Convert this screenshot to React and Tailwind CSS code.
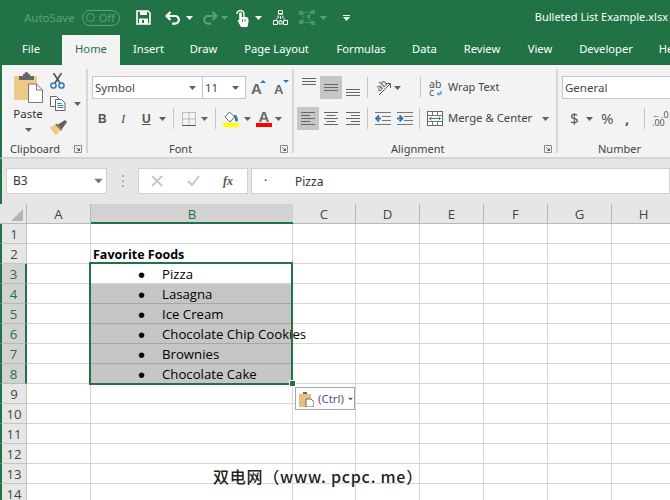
const Caret = ({ c = "#5f5f5f", className = "" }) => (
  <svg width="7" height="4" viewBox="0 0 7 4" className={className}><path d="M0 0h7L3.500 4z" fill={c} /></svg>
);

const Toggle = () => (
  <div className="ml-[7px] flex h-[16px] w-[38px] shrink-0 items-center rounded-full border border-[#5d9f7c] pl-[3px]">
    <div className="h-[9px] w-[9px] rounded-full border border-[#5d9f7c]" />
    <span className="ml-[4px] text-[11px] leading-none text-[#5d9f7c]">Off</span>
  </div>
);
const Save = () => (
  <svg width="15" height="15" viewBox="0 0 15 15" className="ml-[16px] shrink-0">
    <path d="M1 1h11l2 2v11H1z" fill="none" stroke="#fff" strokeWidth="1.600" />
    <rect x="4" y="1" width="7" height="4" fill="#fff" />
    <path d="M3 8.500h9V14H3zM6 10v3h2v-3z" fill="#fff" fillRule="evenodd" />
  </svg>
);
const Undo = ({ c, flip, className }) => (
  <svg width="16" height="14" viewBox="0 0 16 14" className={className} style={flip ? { transform: "scaleX(-1)" } : undefined}>
    <path d="M5.500 1L1.500 5 5.500 9M2.500 5H10a3.800 3.800 0 0 1 0 7.600H7" fill="none" stroke={c} strokeWidth="2.200" />
  </svg>
);
const Touch = () => (
  <svg width="13" height="18" viewBox="0 0 13 18" className="ml-[8px] shrink-0">
    <path d="M1 5a3.500 3.500 0 0 1 7 0v3" fill="none" stroke="#fff" strokeWidth="1.400" />
    <path d="M3.200 4.500a1.300 1.300 0 0 1 2.600 0V8h4a2.500 2.500 0 0 1 2.700 2.500V13l-1 5H5L1.500 11.500l1.700-.7z" fill="#fff" />
    <path d="M6.500 10v3M9 10v3" stroke="#217346" strokeWidth=".8" />
  </svg>
);
const Tree = () => (
  <svg width="15" height="15" viewBox="0 0 15 15" className="ml-[11px] shrink-0">
    <path d="M5.500.5h4v3h-4zM.5 10.500h4v4h-4zM10.500 10.500h4v4h-4zM6 11h3v3H6z" fill="none" stroke="#fff" />
    <path d="M6 4l-3 6.500M9 4l3 6.500M7.500 4v7M5 7.500h5" stroke="#fff" strokeWidth="1.200" strokeDasharray="1 1" />
  </svg>
);
const Shape = () => (
  <svg width="17" height="15" viewBox="0 0 17 15" className="ml-[11px] shrink-0">
    <path d="M4 3l9-1-4 5 4 6-9-1z" fill="none" stroke="#5d9f7c" strokeDasharray="2 1" />
    <path d="M0 1h4v4H0zM12 0h4v4h-4zM0 10h4v4H0zM12 11h4v4h-4zM8 5h3v3H8z" fill="#4f9270" />
  </svg>
);

const TABS = [
  ["File", "w-[62px]"], ["Home", "w-[58px]"], ["Insert", "w-[57px]"], ["Draw", "w-[53px]"],
  ["Page Layout", "w-[93px]"], ["Formulas", "w-[76px]"], ["Data", "w-[51px]"], ["Review", "w-[64px]"],
  ["View", "w-[52px]"], ["Developer", "w-[80px]"], ["Help", "w-[50px]"],
];

const Launcher = ({ className = "" }) => (
  <svg width="8" height="8" viewBox="0 0 8 8" className={className}>
    <path d="M.5 7.500v-7h7v7z" fill="none" stroke="#8a8a8a" />
    <path d="M2.500 2.500l3 3M5.500 3.500v2h-2" fill="none" stroke="#555" />
  </svg>
);
const Sep = () => <div className="mt-[4px] h-[84px] w-[2px] shrink-0 self-start bg-[#d6d6d6]" />;
const VSep = ({ className = "" }) => <div className={`h-[21px] w-[1px] shrink-0 bg-[#c6c6c6] ${className}`} />;

const Clipboard = () => (
  <svg width="29" height="31" viewBox="0 0 29 31">
    <path d="M1.500 4H23v24H1.500A1.500 1.500 0 0 1 0 26.500v-21A1.500 1.500 0 0 1 1.500 4z" fill="#f0c987" />
    <path d="M5 4h4V2h1.500a2 2 0 0 1 4 0H16v2h4v4H5z" fill="#666" />
    <path d="M14.500 12h8l6 6V30.500h-14z" fill="#fff" stroke="#777" />
    <path d="M22.500 12v6H28" fill="none" stroke="#777" />
  </svg>
);
const Scissors = () => (
  <svg width="15" height="16" viewBox="0 0 15 16">
    <path d="M3.500 0l6.500 10M11.500 0L5 10" stroke="#555" strokeWidth="1.700" />
    <circle cx="3.500" cy="12.500" r="2.600" fill="none" stroke="#2f79b9" strokeWidth="1.500" />
    <circle cx="11.500" cy="12.500" r="2.600" fill="none" stroke="#2f79b9" strokeWidth="1.500" />
  </svg>
);
const Copy = () => (
  <svg width="16" height="15" viewBox="0 0 16 15">
    <path d="M.5.500h6l2.500 2.500V3M.5.500v10H5" fill="#fff" stroke="#666" />
    <path d="M5.500 3.500h6l3.500 3.500v7.500H5.500z" fill="#fff" stroke="#666" />
    <path d="M7.500 7.500h4M7.500 9.500h6M7.500 11.500h6" stroke="#2f79b9" />
  </svg>
);
const Painter = () => (
  <svg width="17" height="15" viewBox="0 0 17 15">
    <path d="M0 7l5-2 5 6-4 4c-2-1-5-5-6-8z" fill="#f0c987" />
    <path d="M5 5l6 6 1.500-2L7 3.500z" fill="#8a7a5a" />
    <path d="M8 4.500l7-4.500 2 2-5 7z" fill="#5f5f5f" />
  </svg>
);
const AlignLines = ({ kind, className = "" }) => {
  const sets = {
    top: ["M1 1.500h14", "M1 4.500h14", "M1 7.500h14"],
    mid: ["M1 4.500h14", "M1 7.500h14", "M1 10.500h14"],
    bot: ["M1 7.500h14", "M1 10.500h14", "M1 13.500h14"],
    left: ["M1 1.500h14", "M1 4.500h9", "M1 7.500h14", "M1 10.500h9", "M1 13.500h14"],
    center: ["M1 1.500h14", "M3.500 4.500h9", "M1 7.500h14", "M3.500 10.500h9", "M1 13.500h14"],
    right: ["M1 1.500h14", "M6 4.500h9", "M1 7.500h14", "M6 10.500h9", "M1 13.500h14"],
  };
  return (
    <svg width="16" height="15" viewBox="0 0 16 15" className={className}>
      {sets[kind].map((d) => <path key={d} d={d} stroke="#666" />)}
    </svg>
  );
};
const Indent = ({ flip, className = "" }) => (
  <svg width="16" height="13" viewBox="0 0 16 13" className={className}>
    <path d="M0 .500h16M7 4.500h9M7 8.500h9M0 12.500h16" stroke="#777" />
    {flip ? <path d="M6 6.500H1.500M4 3.500L1 6.500l3 3" stroke="#2f79b9" strokeWidth="1.800" fill="none" />
      : <path d="M0 6.500h4.500M2.500 3.500l3 3-3 3" stroke="#2f79b9" strokeWidth="1.800" fill="none" />}
  </svg>
);
const Orient = ({ className = "" }) => (
  <div className={`relative h-[16px] w-[16px] shrink-0 ${className}`}>
    <span className="absolute left-0 top-[-1px] -rotate-45 text-[10px] leading-[12px] text-[#555]">ab</span>
    <svg width="16" height="16" viewBox="0 0 16 16" className="absolute left-0 top-0"><path d="M4 15L15 4M11 3.500h4.500V8" stroke="#555" fill="none" /></svg>
  </div>
);
const Wrap = () => (
  <div className="relative flex h-[16px] w-[13px] flex-col text-[10.500px] leading-[8px] text-[#555]">
    <span>ab</span>
    <span>c</span>
    <svg width="6" height="5" viewBox="0 0 6 5" className="absolute bottom-0 right-0"><path d="M5 0v3H1.500M3 1.500L1.500 3 3 4.500" fill="none" stroke="#2f79b9" /></svg>
  </div>
);
const Merge = () => (
  <svg width="16" height="15" viewBox="0 0 16 15">
    <rect x=".5" y=".5" width="15" height="14" fill="#fff" stroke="#666" />
    <path d="M.5 4.500h15M.5 10.500h15M5.500.5v4M10.500.5v4M5.500 10.500v4M10.500 10.500v4" stroke="#777" />
    <path d="M2.500 7.500h11M4.500 5.800l-2 1.700 2 1.700M11.500 5.800l2 1.700-2 1.700" stroke="#2f79b9" fill="none" />
  </svg>
);
const Border = () => (
  <svg width="14" height="14" viewBox="0 0 14 14">
    <path d="M.5.500h13v13H.5zM7 .5v13M.5 7h13" fill="none" stroke="#888" strokeDasharray="1 1" />
    <path d="M.5 13.500h13" stroke="#555" />
  </svg>
);
const Fill = () => (
  <div className="flex w-[16px] flex-col items-center">
    <svg width="16" height="12" viewBox="0 0 16 12">
      <path d="M6.500 1l5 5-4.500 5-5-5z" fill="#fff" stroke="#666" />
      <path d="M4.500 3V1.500M11 4h2c1 2 2 3 2 5a1.500 1.500 0 0 1-3 0c0-1 0-2-1-3z" fill="#2f79b9" />
    </svg>
    <div className="h-[4px] w-[16px] bg-[#ffff00]" />
  </div>
);
const FontColor = () => (
  <div className="flex w-[16px] flex-col items-center">
    <span className="font-['Liberation_Sans',sans-serif] text-[15px] font-bold leading-[12px] text-[#666]">A</span>
    <div className="h-[4px] w-[16px] bg-[#ff0000]" />
  </div>
);
const Grow = ({ up, className = "" }) => (
  <div className={`relative flex h-[17px] w-[15px] items-end ${className}`}>
    <span className={`${up ? "text-[15px]" : "text-[13px]"} font-['Liberation_Sans',sans-serif] font-bold leading-none text-[#666]`}>A</span>
    <svg width="6" height="3" viewBox="0 0 6 3" className="absolute right-0 top-[1px]">
      <path d={up ? "M0 3h6L3 0z" : "M0 0h6L3 3z"} fill="#2f79b9" />
    </svg>
  </div>
);
const Label = ({ children, className = "", launcher }) => (
  <div className={`absolute bottom-0 left-0 flex h-[16px] w-full items-center text-[11px] text-[#444] ${className}`}>
    {children}
    {launcher && <Launcher className="absolute right-[4px] top-[4px]" />}
  </div>
);
const Row = ({ children, className = "" }) => <div className={`flex items-center ${className}`}>{children}</div>;

const HEAD = [["A", 0], ["B", 1], ["C", 0], ["D", 0], ["E", 0], ["F", 0], ["G", 0], ["H", 0]];
const ROWS = Array.from({ length: 14 }, (_, i) => i + 1);
const FOODS = { 3: "Pizza", 4: "Lasagna", 5: "Ice Cream", 6: "Chocolate Chip Cookies", 7: "Brownies", 8: "Chocolate Cake" };

export default function App() {
  return (
    <div className="relative h-[500px] w-[670px] overflow-hidden bg-white font-['Noto_Sans',sans-serif]">
      {/* Title bar */}
      <div className="flex h-[35px] items-center bg-[#217346] pl-[24px]">
        <span className="text-[11.500px] text-[#5d9f7c]">AutoSave</span>
        <Toggle />
        <Save />
        <Undo c="#fff" className="ml-[14px] shrink-0" />
        <Caret c="#fff" className="ml-[5px] shrink-0" />
        <Undo c="#5d9f7c" flip className="ml-[9px] shrink-0" />
        <Caret c="#5d9f7c" className="ml-[3px] shrink-0" />
        <Touch />
        <Caret c="#fff" className="ml-[6px] shrink-0" />
        <Tree />
        <Shape />
        <Caret c="#5d9f7c" className="ml-[4px] shrink-0" />
        <svg width="7" height="6" viewBox="0 0 7 6" className="ml-[16px] shrink-0"><path d="M0 0h7v1H0zM0 2h7L3.500 6z" fill="#fff" /></svg>
        <span className="ml-auto whitespace-nowrap pr-[2px] text-[11px] text-white">Bulleted List Example.xlsx</span>
      </div>
      {/* Tabs */}
      <div className="flex h-[30px] items-center overflow-hidden bg-[#217346]">
        {TABS.map(([t, w]) => (
          <div key={t} className={`${w} flex h-full shrink-0 items-center justify-center pb-[1px] text-[11.200px] ${t === "Home" ? "bg-[#f3f3f3] text-[#217346]" : "text-white"}`}>{t}</div>
        ))}
      </div>
      {/* Ribbon */}
      <div className="flex h-[94px] overflow-hidden border-b-2 border-l-2 border-[#d4d4d4] border-l-[#217346] bg-[#f3f3f3]">
        {/* Clipboard */}
        <div className="relative flex w-[84px] shrink-0 pl-[10px] pt-[7px]">
          <div className="flex w-[32px] flex-col items-center">
            <Clipboard />
            <span className="mt-[2px] text-[11.500px] leading-[18px] text-[#333]">Paste</span>
            <Caret className="mt-[5px]" />
          </div>
          <div className="ml-[6px] flex flex-col pt-[1px]">
            <Scissors />
            <Row className="mt-[7px]"><Copy /><Caret className="ml-[8px]" /></Row>
            <div className="mt-[9px]"><Painter /></div>
          </div>
          <Label launcher className="pl-[8px]">Clipboard</Label>
        </div>
        <Sep />
        {/* Font */}
        <div className="relative w-[204px] shrink-0 pl-[4px] pt-[11px]">
          <Row>
            <div className="flex h-[23px] w-[111px] items-center justify-between border border-[#c6c6c6] bg-white pl-[2px] pr-[6px] text-[11.500px] text-[#444]">Symbol<Caret /></div>
            <div className="flex h-[23px] w-[43px] items-center justify-between border border-l-0 border-[#c6c6c6] bg-white pl-[2px] pr-[6px] text-[11.500px] text-[#444]">11<Caret /></div>
            <Grow up className="ml-[5px]" />
            <Grow className="ml-[8px]" />
          </Row>
          <Row className="mt-[8px] h-[23px]">
            <span className="ml-[6px] w-[8px] font-['Liberation_Sans',sans-serif] text-[12px] font-bold text-[#555]">B</span>
            <span className="ml-[15px] w-[7px] font-['Liberation_Serif',serif] text-[13px] italic text-[#555]">I</span>
            <span className="ml-[14px] w-[9px] font-['Liberation_Sans',sans-serif] text-[12px] font-bold text-[#555] underline">U</span>
            <Caret className="ml-[8px]" />
            <VSep className="ml-[7px]" />
            <div className="ml-[8px]"><Border /></div>
            <Caret className="ml-[5px]" />
            <VSep className="ml-[7px]" />
            <div className="ml-[7px]"><Fill /></div>
            <Caret className="ml-[5px]" />
            <div className="ml-[5px]"><FontColor /></div>
            <Caret className="ml-[3px]" />
          </Row>
          <Label launcher className="pl-[81px]">Font</Label>
        </div>
        <Sep />
        {/* Alignment */}
        <div className="relative w-[262px] shrink-0 pl-[3px] pt-[11px]">
          <Row className="h-[23px]">
            <div className="flex h-[23px] w-[23px] items-center justify-center"><AlignLines kind="top" className="-mt-[6px]" /></div>
            <div className="flex h-[23px] w-[22px] items-center justify-center bg-[#c6c6c6]"><AlignLines kind="mid" /></div>
            <div className="flex h-[23px] w-[22px] items-center justify-center"><AlignLines kind="bot" className="mt-[4px]" /></div>
            <VSep className="ml-[3px]" />
            <Orient className="ml-[7px]" />
            <Caret className="ml-[3px]" />
            <VSep className="ml-[19px]" />
            <div className="ml-[8px]"><Wrap /></div>
            <span className="ml-[6px] whitespace-nowrap text-[11px] text-[#444]">Wrap Text</span>
          </Row>
          <Row className="mt-[8px] h-[23px]">
            <div className="flex h-[23px] w-[22px] items-center justify-center bg-[#c6c6c6]"><AlignLines kind="left" /></div>
            <div className="flex h-[23px] w-[23px] items-center justify-center"><AlignLines kind="center" /></div>
            <div className="flex h-[23px] w-[22px] items-center justify-center"><AlignLines kind="right" /></div>
            <VSep className="ml-[3px]" />
            <Indent flip className="ml-[7px]" />
            <Indent className="ml-[6px]" />
            <VSep className="ml-[6px]" />
            <div className="ml-[7px]"><Merge /></div>
            <span className="ml-[5px] whitespace-nowrap text-[11.300px] text-[#444]">Merge &amp; Center</span>
            <Caret className="ml-[10px]" />
          </Row>
          <Label launcher className="pl-[97px]">Alignment</Label>
        </div>
        <Sep />
        {/* Number */}
        <div className="relative w-[120px] shrink-0 pl-[4px] pt-[11px]">
          <div className="flex h-[23px] w-[130px] items-center border border-[#c6c6c6] bg-white pl-[2px] text-[11.500px] text-[#444]">General</div>
          <Row className="mt-[8px] h-[23px]">
            <span className="ml-[8px] w-[9px] text-[15px] text-[#555]">$</span>
            <Caret className="ml-[7px]" />
            <span className="ml-[8px] w-[14px] text-[15px] text-[#555]">%</span>
            <span className="ml-[10px] w-[6px] text-[15px] font-bold text-[#555]">,</span>
            <VSep className="ml-[13px]" />
            <span className="ml-[7px] whitespace-nowrap text-[9px] leading-[8px] text-[#555]"><span className="text-[#2f79b9]">←</span>.0<br />.00</span>
          </Row>
          <Label className="pl-[40px]">Number</Label>
        </div>
      </div>
      {/* Formula bar */}
      <div className="flex h-[45px] items-start border-l-2 border-[#217346] bg-[#e6e6e6] pl-[4px] pt-[9px]">
        <div className="flex h-[26px] w-[101px] shrink-0 items-center justify-between border border-[#d0d0d0] bg-white pl-[6px] pr-[4px] text-[12px] text-[#333]">B3<Caret c="#777" className="scale-125" /></div>
        <div className="ml-[15px] flex h-[26px] w-[2px] shrink-0 flex-col justify-center gap-[3px]">
          <div className="h-[2px] w-[2px] bg-[#b0b0b0]" /><div className="h-[2px] w-[2px] bg-[#b0b0b0]" /><div className="h-[2px] w-[2px] bg-[#b0b0b0]" />
        </div>
        <div className="ml-[14px] flex h-[26px] w-[110px] shrink-0 items-center border border-[#d0d0d0] bg-white">
          <svg width="12" height="12" viewBox="0 0 12 12" className="ml-[12px]"><path d="M1 1l10 10M11 1L1 11" stroke="#c6c6c6" strokeWidth="1.800" /></svg>
          <svg width="13" height="12" viewBox="0 0 13 12" className="ml-[24px]"><path d="M1 6l4 4 7-9" fill="none" stroke="#c6c6c6" strokeWidth="2" /></svg>
          <span className="ml-[23px] font-['Liberation_Serif',serif] text-[12px] font-bold italic text-[#555]">fx</span>
        </div>
        <div className="ml-[3px] flex h-[26px] grow items-center border border-[#d0d0d0] bg-white pl-[12px] text-[12px] text-[#333]">
          <span className="w-[31px]">·</span><span className="pt-[1px]">Pizza</span>
        </div>
      </div>
      {/* Sheet */}
      <div className="relative grid grid-cols-[27px_64px_202px_63px_64px_64px_64px_64px_64px] auto-rows-[20px] font-['Open_Sans',sans-serif] text-[13.200px] text-black">
        <div className="flex items-end justify-end border-b border-r border-[#b8b8b8] bg-[#e6e6e6] pb-[2px] pr-[3px]">
          <svg width="12" height="12" viewBox="0 0 12 12"><path d="M12 0v12H0z" fill="#b4b4b4" /></svg>
        </div>
        {HEAD.map(([h, sel]) => (
          <div key={h} className={`flex items-center justify-center pt-[3px] ${sel ? "border-b-2 border-[#217346] bg-[#d2d2d2] text-[#217346]" : "border-b border-r border-[#b8b8b8] bg-[#e6e6e6] text-[#444]"}`}>{h}</div>
        ))}
        {ROWS.map((r) => {
          const selRow = r >= 3 && r <= 8;
          const food = FOODS[r];
          return [
            <div key={`h${r}`} className={`flex items-center justify-center border-b pt-[3px] ${selRow ? "border-r-2 border-b-[#b8b8b8] border-r-[#217346] bg-[#d2d2d2] text-[#217346]" : "border-r border-[#c4c4c4] bg-[#e6e6e6] text-[#444]"} border-l-2 border-l-[#217346]`}>{r}</div>,
            ...HEAD.map(([h]) => {
              const isB = h === "B";
              const shaded = isB && r >= 4 && r <= 8;
              return (
                <div key={`${h}${r}`} className={`flex items-center whitespace-nowrap border-b border-r pt-[3px] ${shaded ? "border-b-[#a6a6a6] border-r-[#c6c6c6] bg-[#c6c6c6]" : "border-[#d4d4d4]"}`}>
                  {isB && r === 2 && <span className="ml-[2px] text-[12.500px] font-bold">Favorite Foods</span>}
                  {isB && food && (
                    <>
                      <span className="ml-[47px] w-[24px] shrink-0 font-['Liberation_Sans',sans-serif] text-[20px] leading-[16px]">•</span>
                      <span className="shrink-0">{food}</span>
                    </>
                  )}
                </div>
              );
            }),
          ];
        })}
        {/* Selection */}
        <div className="pointer-events-none absolute left-[89px] top-[58px] h-[123px] w-[204px] border-2 border-[#217346]" />
        <div className="absolute left-[289px] top-[176px] h-[7px] w-[7px] border border-white bg-[#217346]" />
        {/* Paste options */}
        <div className="absolute left-[295px] top-[183px] flex h-[23px] w-[60px] items-center border border-[#a6a6a6] bg-white pl-[3px] font-['Noto_Sans',sans-serif] text-[11.500px] text-[#6a4a7c]">
          <svg width="15" height="16" viewBox="0 0 15 16"><rect x="0" y="3" width="12" height="13" fill="#e8bf80" /><path d="M4 3V1h4v2z" fill="#666" /><path d="M7 8h5l3 3v5H7z" fill="#fff" stroke="#666" /></svg>
          <span className="ml-[4px]">(Ctrl)</span>
          <Caret className="ml-[3px] scale-75" />
        </div>
      </div>
      {/* Watermark */}
      <div className="absolute left-[213px] top-[463px] whitespace-nowrap font-['Noto_Sans_CJK_SC',sans-serif] text-[16px] font-medium leading-[26px] tracking-[0.75px] text-[#222] [text-shadow:0_0_2px_#fff,0_0_2px_#fff]">双电网（www. pcpc. me）</div>
    </div>
  );
}
